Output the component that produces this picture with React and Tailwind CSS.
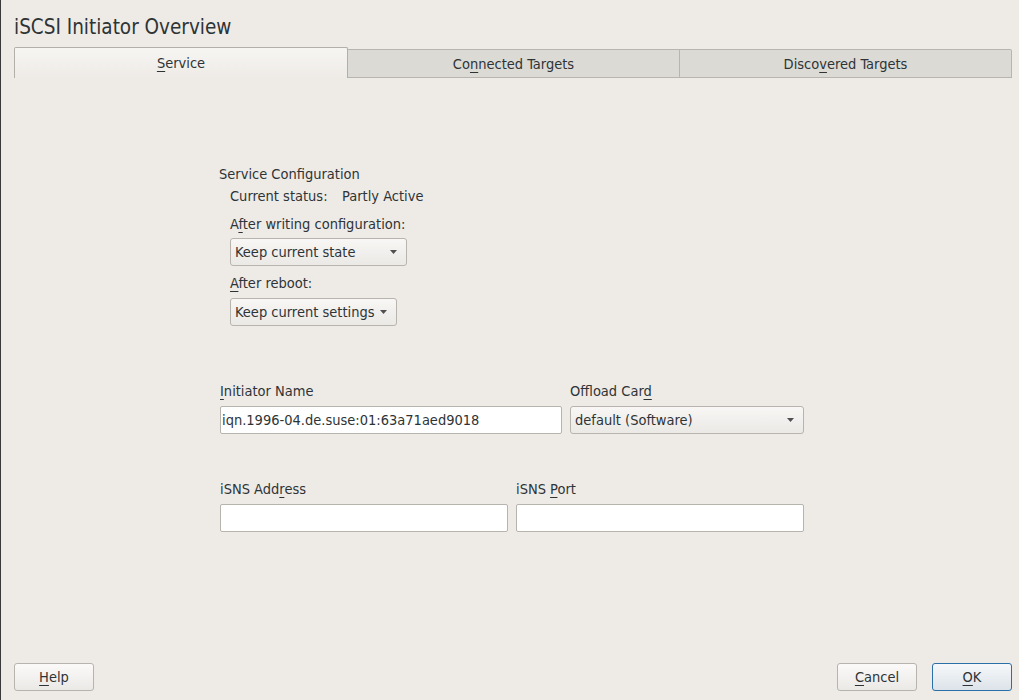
import React from "react";

const font = { fontFamily: '"DejaVu Sans Condensed", "DejaVu Sans", sans-serif' };

function U({ children }) {
  return <span className="underline decoration-1 underline-offset-[3px]">{children}</span>;
}

function Arrow() {
  return (
    <svg width="7" height="4" viewBox="0 0 7 4" className="shrink-0">
      <path d="M0 0 H7 L3.5 4 Z" fill="#505050" />
    </svg>
  );
}

function Combo({ value, className }) {
  return (
    <div
      className={`flex h-[28px] items-center justify-between rounded-[3px] border border-[#b7b3ad] bg-gradient-to-b from-[#f8f7f5] to-[#ebe9e6] pl-[4px] pr-[9px] text-[14.5px] text-[#2e3436] ${className}`}
    >
      <span>{value}</span>
      <Arrow />
    </div>
  );
}

function Field({ value, className }) {
  return (
    <div
      className={`flex h-[28px] items-center rounded-[2px] border border-[#b7b3ad] bg-white pl-[1px] text-[14.5px] text-[#2e3436] ${className}`}
    >
      {value}
    </div>
  );
}

function Button({ children, primary, className }) {
  return (
    <div
      className={`flex h-[28px] w-[80px] items-center justify-center rounded-[3px] border pt-[1px] text-[14.5px] text-[#2e3436] ${
        primary
          ? "border-[#2a6fa8] bg-gradient-to-b from-[#f6f8fa] to-[#dce3e9]"
          : "border-[#b7b3ad] bg-gradient-to-b from-[#fbfaf9] to-[#ebe9e6]"
      } ${className || ""}`}
    >
      {children}
    </div>
  );
}

export default function App() {
  return (
    <div
      style={font}
      className="flex h-[700px] w-[1019px] flex-col overflow-hidden border-l border-[#3a3a3a] bg-[#eeebe7] text-[#2e3436]"
    >
      {/* Title */}
      <div className="h-[47px] pl-[13px] pt-[14px] text-[20.5px] leading-[26px]">
        iSCSI Initiator Overview
      </div>

      {/* Tabs */}
      <div className="ml-[13px] flex h-[31px] items-end text-[14.5px]">
        <div className="flex h-[31px] w-[334px] items-center justify-center rounded-t-[2px] border-x border-t border-[#b2aea8] bg-gradient-to-b from-[#f7f5f2] to-[#eeebe7] pt-[1px]">
          <span>
            <U>S</U>ervice
          </span>
        </div>
        <div className="flex h-[29px] w-[332px] items-center justify-center border border-l-0 border-[#b8b5af] bg-[#dcdad5] pt-[2px]">
          <span>
            Co<U>n</U>nected Targets
          </span>
        </div>
        <div className="flex h-[29px] w-[332px] items-center justify-center rounded-tr-[2px] border border-l-0 border-[#b8b5af] bg-[#dcdad5] pt-[2px]">
          <span>
            Disco<U>v</U>ered Targets
          </span>
        </div>
      </div>

      {/* Content */}
      <div className="flex flex-1 flex-col pl-[218px] text-[14.5px] leading-[17px]">
        <div className="mt-[88px]">Service Configuration</div>
        <div className="ml-[11px] flex flex-col">
          <div className="mt-[5px] flex">
            <span className="w-[112px]">Current status:</span>
            <span>Partly Active</span>
          </div>
          <div className="mt-[11px]">
            A<U>f</U>ter writing configuration:
          </div>
          <Combo value="Keep current state" className="mt-[5px] w-[177px]" />
          <div className="mt-[9px]">
            <U>A</U>fter reboot:
          </div>
          <Combo value="Keep current settings" className="mt-[6px] w-[167px]" />
        </div>

        <div className="ml-[1px] mt-[57px] flex gap-[8px]">
          <div className="flex w-[342px] flex-col">
            <div>
              <U>I</U>nitiator Name
            </div>
            <Field value="iqn.1996-04.de.suse:01:63a71aed9018" className="mt-[6px]" />
          </div>
          <div className="flex w-[234px] flex-col">
            <div>
              Offload Car<U>d</U>
            </div>
            <Combo value="default (Software)" className="mt-[6px]" />
          </div>
        </div>

        <div className="ml-[1px] mt-[47px] flex gap-[8px]">
          <div className="flex w-[288px] flex-col">
            <div>
              iSNS Add<U>r</U>ess
            </div>
            <Field value="" className="mt-[6px]" />
          </div>
          <div className="flex w-[288px] flex-col">
            <div>
              iSNS <U>P</U>ort
            </div>
            <Field value="" className="mt-[6px]" />
          </div>
        </div>
      </div>

      {/* Buttons */}
      <div className="mb-[9px] flex items-center pl-[13px] pr-[7px]">
        <Button>
          <span>
            <U>H</U>elp
          </span>
        </Button>
        <div className="flex-1" />
        <Button>
          <span>
            <U>C</U>ancel
          </span>
        </Button>
        <Button primary className="ml-[15px]">
          <span>
            <U>O</U>K
          </span>
        </Button>
      </div>
    </div>
  );
}
